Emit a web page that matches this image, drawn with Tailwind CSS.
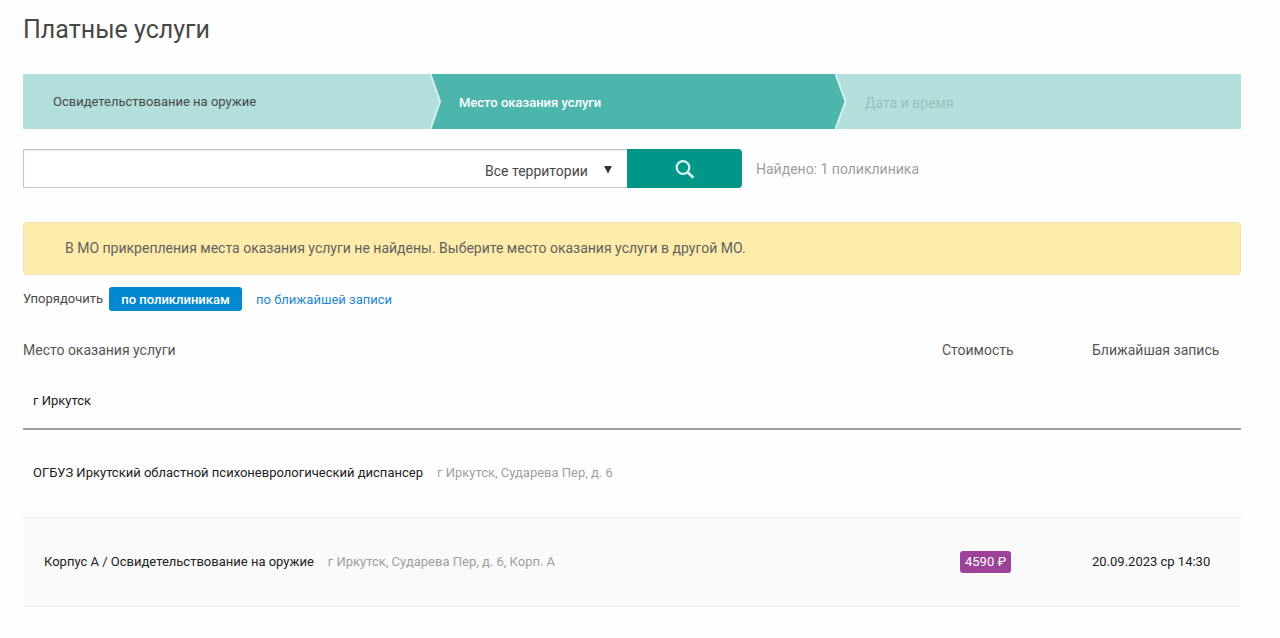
<!DOCTYPE html>
<html lang="ru">
<head>
<meta charset="utf-8">
<meta name="viewport" content="width=device-width, initial-scale=1">
<title>Платные услуги</title>
<script src="https://cdn.jsdelivr.net/npm/@tailwindcss/browser@4"></script>
</head>
<body class="bg-[#fefefe] font-[Roboto,sans-serif] text-sm text-[#484848]">
<main class="pt-3 pb-6 pl-[23px] pr-[39px]">
  <h1 class="text-[25px] leading-9">Платные услуги</h1>

  <ol class="mt-[26px] grid h-[55px] grid-cols-3 bg-[#b2dfdb]">
    <li class="flex items-center pl-[30px] pt-0.5 text-[13px]"><a href="#service">Освидетельствование на оружие</a></li>
    <li class="relative flex items-center bg-[#4db6ac] pl-[30px] pt-1 text-[13px] font-medium text-white" aria-current="step">
      <svg class="absolute left-0 top-0 h-full w-3" viewBox="0 0 12 55" preserveAspectRatio="none" aria-hidden="true"><path d="M0 0H1.500L11.500 27.500L1.500 55H0Z" fill="#b2dfdb"/><path d="M1.500 0L11 27.500L1.500 55" fill="none" stroke="#d5efec" stroke-width="2"/></svg>
      Место оказания услуги
    </li>
    <li class="relative flex items-center pl-[30px] pt-0.5 text-[#9bbfbc]">
      <svg class="absolute left-0 top-0 h-full w-3" viewBox="0 0 12 55" preserveAspectRatio="none" aria-hidden="true"><path d="M0 0L10 27.500L0 55Z" fill="#4db6ac"/><path d="M0.500 0L10.500 27.500L0.500 55" fill="none" stroke="#d5efec" stroke-width="2"/></svg>
      Дата и время
    </li>
  </ol>

  <form class="mt-5 flex h-[39px] items-stretch">
    <div class="flex w-[604px] border border-r-0 border-[#c8c8c8] bg-white shadow-[inset_0_1px_1px_#e8e8e8]">
      <input type="search" aria-label="Поиск поликлиники" class="min-w-0 flex-1 bg-transparent px-3 outline-none">
      <label class="relative flex items-center">
        <select aria-label="Территория" class="w-[142px] appearance-none bg-transparent pt-1 leading-6 outline-none"><option>Все территории</option></select>
        <svg class="pointer-events-none absolute right-[15px] top-4 h-2 w-2" viewBox="0 0 8 8" aria-hidden="true"><path d="M0 0H8L4 7.500Z" fill="#333"/></svg>
      </label>
    </div>
    <button type="submit" aria-label="Найти" class="flex w-[115px] items-center justify-center rounded-r-sm bg-[#009688]">
      <svg class="h-5 w-5" viewBox="0 0 20 20" fill="none" stroke="#d9f2ef" aria-hidden="true"><circle cx="8" cy="8.500" r="6.300" stroke-width="2.300"/><path d="M12.600 13.200L18.500 18.800" stroke-width="2.800"/></svg>
    </button>
    <output class="ml-[14px] self-center text-[#9e9e9e]">Найдено: 1 поликлиника</output>
  </form>

  <p role="status" class="mt-[34px] flex h-[53px] items-center rounded border border-[#f3dfb0] bg-[#ffecaa] px-[41px] pb-0.5 text-[#616161]">В МО прикрепления места оказания услуги не найдены. Выберите место оказания услуги в другой МО.</p>

  <div class="mt-3 flex h-6 items-center text-[13px]">
    <span class="w-[86px]">Упорядочить</span>
    <button type="button" class="flex h-6 w-[133px] items-center justify-center rounded-[3px] bg-[#0288d1] pt-0.5 font-medium text-white">по поликлиникам</button>
    <a href="#nearest" class="ml-[14px] pt-0.5 text-[#1e88d0]">по ближайшей записи</a>
  </div>

  <table class="mt-[22px] w-full table-fixed text-left text-[13px] text-[#212121]">
    <colgroup><col><col class="w-[150px]"><col class="w-[149px]"></colgroup>
    <thead>
      <tr class="h-[34px] text-sm text-[#555]"><th class="font-normal">Место оказания услуги</th><th class="font-normal">Стоимость</th><th class="font-normal">Ближайшая запись</th></tr>
    </thead>
    <tbody>
      <tr class="h-[62px] border-b-2 border-[#a0a0a0]"><th colspan="3" scope="rowgroup" class="pl-[10px] pt-2 font-normal">г Иркутск</th></tr>
      <tr class="h-[88px] border-b border-[#ececec]"><td colspan="3" class="pl-[10px]">ОГБУЗ Иркутский областной психоневрологический диспансер<span class="ml-[14px] text-[#9e9e9e]">г Иркутск, Сударева Пер, д. 6</span></td></tr>
      <tr class="h-[89px] border-b border-[#ececec] bg-[#fafafa]"><td class="pt-px pl-[21px]">Корпус А / Освидетельствование на оружие<span class="ml-[14px] text-[#9e9e9e]">г Иркутск, Сударева Пер, д. 6, Корп. А</span></td><td class="pt-px pl-[18px]"><span class="inline-block rounded-[3px] bg-[#9c4299] px-[5px] text-[13px] leading-[22px] text-white">4590 ₽</span></td><td class="pt-px">20.09.2023 ср 14:30</td></tr>
    </tbody>
  </table>
</main>
</body>
</html>
